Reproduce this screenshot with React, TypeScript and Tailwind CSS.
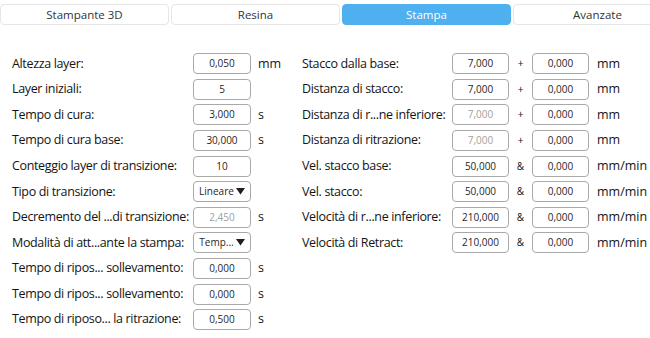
import React from 'react';

type Field = {
  label: string;
  value: string;
  unit?: string;
  disabled?: boolean;
  select?: boolean;
};

type PairField = {
  label: string;
  value: string;
  extra: string;
  sep: string;
  unit: string;
  disabled?: boolean;
};

const tabs = ['Stampante 3D', 'Resina', 'Stampa', 'Avanzate'];

const leftFields: Field[] = [
  { label: 'Altezza layer:', value: '0,050', unit: 'mm' },
  { label: 'Layer iniziali:', value: '5' },
  { label: 'Tempo di cura:', value: '3,000', unit: 's' },
  { label: 'Tempo di cura base:', value: '30,000', unit: 's' },
  { label: 'Conteggio layer di transizione:', value: '10' },
  { label: 'Tipo di transizione:', value: 'Lineare', select: true },
  { label: 'Decremento del ...di transizione:', value: '2,450', unit: 's', disabled: true },
  { label: 'Modalità di att...ante la stampa:', value: 'Temp...', select: true },
  { label: 'Tempo di ripos... sollevamento:', value: '0,000', unit: 's' },
  { label: 'Tempo di ripos... sollevamento:', value: '0,000', unit: 's' },
  { label: 'Tempo di riposo... la ritrazione:', value: '0,500', unit: 's' },
];

const rightFields: PairField[] = [
  { label: 'Stacco dalla base:', value: '7,000', sep: '+', extra: '0,000', unit: 'mm' },
  { label: 'Distanza di stacco:', value: '7,000', sep: '+', extra: '0,000', unit: 'mm' },
  { label: 'Distanza di r...ne inferiore:', value: '7,000', sep: '+', extra: '0,000', unit: 'mm', disabled: true },
  { label: 'Distanza di ritrazione:', value: '7,000', sep: '+', extra: '0,000', unit: 'mm', disabled: true },
  { label: 'Vel. stacco base:', value: '50,000', sep: '&', extra: '0,000', unit: 'mm/min' },
  { label: 'Vel. stacco:', value: '50,000', sep: '&', extra: '0,000', unit: 'mm/min' },
  { label: 'Velocità di r...ne inferiore:', value: '210,000', sep: '&', extra: '0,000', unit: 'mm/min' },
  { label: 'Velocità di Retract:', value: '210,000', sep: '&', extra: '0,000', unit: 'mm/min' },
];

const Box: React.FC<{ value: string; disabled?: boolean; select?: boolean; w: string }> = ({ value, disabled, select, w }) => (
  <div
    className={`${w} h-[21px] shrink-0 rounded-[4px] border border-[#a9a9a9] bg-white flex items-center justify-center text-[10px] ${
      disabled ? 'text-[#a0a0a0]' : 'text-[#1f1f1f]'
    }`}
  >
    {select ? (
      <span className="flex items-center gap-[2px]">
        {value}
        <svg width="9" height="7" viewBox="0 0 9 7">
          <path d="M0 0 H9 L4.5 6.5 Z" fill="#1f1f1f" />
        </svg>
      </span>
    ) : (
      value
    )}
  </div>
);

const App: React.FC = () => {
  return (
    <div
      className="w-[650px] h-[338px] overflow-hidden bg-white text-[#141414]"
      style={{ fontFamily: '"Open Sans", "Noto Sans", sans-serif' }}
    >
      <div className="flex gap-[2px] w-[684px] pt-[4px]">
        {tabs.map((t) => (
          <div
            key={t}
            className={`w-[169px] h-[21px] rounded-[4px] border flex items-center justify-center text-[11.5px] ${
              t === 'Stampa'
                ? 'bg-[#4eb0ee] border-[#4eb0ee] text-white'
                : 'bg-white border-[#e6e6e6] text-[#333]'
            }`}
          >
            {t}
          </div>
        ))}
      </div>

      <div className="flex pt-[26px]">
        <div className="flex flex-col pl-[12px] w-[302px]">
          {leftFields.map((f, i) => (
            <div key={i} className="flex items-center h-[25.6px]">
              <div className="w-[181px] whitespace-nowrap text-[12.5px] leading-none tracking-[-0.35px]">{f.label}</div>
              <Box value={f.value} disabled={f.disabled} select={f.select} w="w-[58px]" />
              <div className="pl-[7px] text-[12.5px] leading-none">{f.unit}</div>
            </div>
          ))}
        </div>
        <div className="flex flex-col">
          {rightFields.map((f, i) => (
            <div key={i} className="flex items-center h-[25.6px]">
              <div className="w-[150px] whitespace-nowrap text-[12.5px] leading-none tracking-[-0.35px]">{f.label}</div>
              <Box value={f.value} disabled={f.disabled} w="w-[57px]" />
              <div className="w-[23px] text-center text-[10px]">{f.sep}</div>
              <Box value={f.extra} w="w-[57px]" />
              <div className="pl-[8px] text-[12.5px] leading-none whitespace-nowrap">{f.unit}</div>
            </div>
          ))}
        </div>
      </div>
    </div>
  );
};

export default App;
